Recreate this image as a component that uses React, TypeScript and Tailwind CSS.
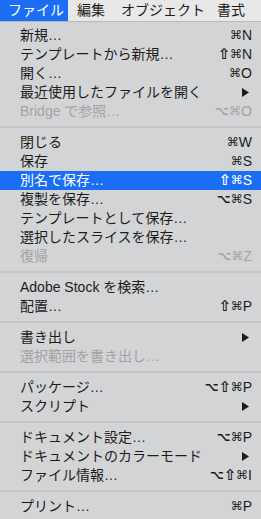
type Item = {
  label: string
  key?: string
  sub?: boolean
  disabled?: boolean
  active?: boolean
}

const groups: Item[][] = [
  [
    { label: '新規…', key: '⌘N' },
    { label: 'テンプレートから新規…', key: '⇧⌘N' },
    { label: '開く…', key: '⌘O' },
    { label: '最近使用したファイルを開く', sub: true },
    { label: 'Bridge で参照…', key: '⌥⌘O', disabled: true },
  ],
  [
    { label: '閉じる', key: '⌘W' },
    { label: '保存', key: '⌘S' },
    { label: '別名で保存…', key: '⇧⌘S', active: true },
    { label: '複製を保存…', key: '⌥⌘S' },
    { label: 'テンプレートとして保存…' },
    { label: '選択したスライスを保存…' },
    { label: '復帰', key: '⌥⌘Z', disabled: true },
  ],
  [
    { label: 'Adobe Stock を検索…' },
    { label: '配置…', key: '⇧⌘P' },
  ],
  [
    { label: '書き出し', sub: true },
    { label: '選択範囲を書き出し…', disabled: true },
  ],
  [
    { label: 'パッケージ…', key: '⌥⇧⌘P' },
    { label: 'スクリプト', sub: true },
  ],
  [
    { label: 'ドキュメント設定…', key: '⌥⌘P' },
    { label: 'ドキュメントのカラーモード', sub: true },
    { label: 'ファイル情報…', key: '⌥⇧⌘I' },
  ],
  [{ label: 'プリント…', key: '⌘P' }],
]

// each modifier glyph gets its own slot so the widths line up like the mac menu
function Mod({ c }: { c: string }) {
  if (c === '⌥') return <span className="w-[14px] overflow-hidden text-left text-[12px] font-bold">⌥</span>
  if (c === '⇧') return <span className="w-[12px] overflow-hidden text-left text-[15px] font-bold">⇧</span>
  return <span className="w-[12px] overflow-hidden text-left text-[12px]">⌘</span>
}

function Shortcut({ keys }: { keys: string }) {
  const chars = Array.from(keys)
  const last = chars.pop()
  return (
    <span className="flex items-center font-['DejaVu_Sans',sans-serif]">
      {chars.map((c, i) => (
        <Mod key={i} c={c} />
      ))}
      <span className="font-['Liberation_Sans',sans-serif] text-[14px]">{last}</span>
    </span>
  )
}

function Row({ item }: { item: Item }) {
  return (
    <div
      className={`flex h-[19px] items-center justify-between pl-[20px] pr-[9px] text-[14px] leading-[19px] ${
        item.active ? 'bg-[#1b6ef3] text-white' : item.disabled ? 'text-[#a2a3a5]' : 'text-[#1c1c1c]'
      }`}
    >
      <span className="whitespace-nowrap">{item.label}</span>
      {item.key && <Shortcut keys={item.key} />}
      {item.sub && (
        <svg width="7" height="9" viewBox="0 0 7 9" className="mr-[3px]">
          <polygon points="0,0 7,4.5 0,9" fill="#1c1c1c" />
        </svg>
      )}
    </div>
  )
}

export default function App() {
  return (
    <div className="w-[261px] h-[519px] overflow-hidden bg-[#d3d4d6] font-['Liberation_Sans','Noto_Sans_CJK_JP',sans-serif]">
      <div className="flex h-[22px] items-stretch border-b border-[#b9b9bb] bg-[#e8e8e9] text-[14px] text-[#1c1c1c]">
        <div className="flex w-[68px] items-center bg-[#1b6ef3] pl-[8px] text-white">ファイル</div>
        <div className="ml-[9px] flex items-center">編集</div>
        <div className="ml-[16px] flex items-center">オブジェクト</div>
        <div className="ml-[12px] flex items-center">書式</div>
      </div>
      <div className="pt-[4px] pb-[3px]">
        {groups.map((g, gi) => (
          <div key={gi}>
            {gi > 0 && (
              <div className="flex h-[12px] items-center">
                <div className="h-[2px] w-full bg-[#c3c4c6]" />
              </div>
            )}
            {g.map((item) => (
              <Row key={item.label} item={item} />
            ))}
          </div>
        ))}
      </div>
    </div>
  )
}
